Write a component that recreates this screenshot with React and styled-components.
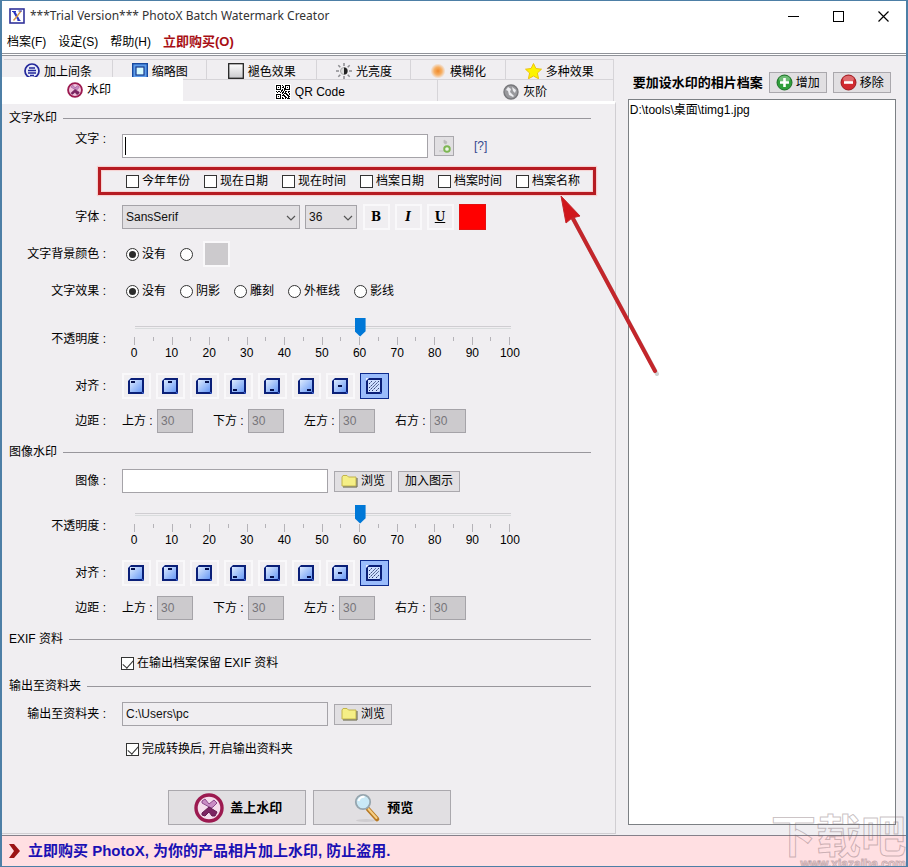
import React, { useState } from 'react'
import styled, { createGlobalStyle, css } from 'styled-components'

const GlobalStyle = createGlobalStyle`
  * {
    box-sizing: border-box;
  }
  body {
    margin: 0;
    background: #f0eef1;
    color: #000;
  }
  body, button, input, select {
    font-family: 'Liberation Sans', 'Noto Sans CJK SC', sans-serif;
    font-size: 12px;
    line-height: 16px;
  }
`

const Window = styled.div`
  position: relative;
  display: flex;
  flex-direction: column;
  min-height: 100vh;
  overflow: hidden;
  border: solid #4d7fa6;
  border-width: 1px 2px;
  background: #f0eef1;
`

const TitleBar = styled.header`
  display: flex;
  align-items: center;
  height: 30px;
  padding-left: 7px;
  background: #fff;
`

const Title = styled.h1`
  flex: 1;
  margin: 0 0 0 5px;
  color: #333;
  font-family: 'Noto Sans', sans-serif;
  font-size: 12px;
  font-weight: normal;
`

const WindowButton = styled.button`
  display: flex;
  align-items: center;
  justify-content: center;
  width: 45px;
  height: 28px;
  padding: 0;
  border: 0;
  background: transparent;
`

const MenuBar = styled.nav`
  display: flex;
  align-items: center;
  gap: 12px;
  height: 25px;
  padding: 0 5px 1px;
  border-bottom: 3px double #909399;
  background: #fff;
`

const MenuItem = styled.button`
  padding: 0;
  border: 0;
  background: transparent;
  ${props => props.$buy && css`
    color: #a80f14;
    font-size: 13px;
    font-weight: bold;
  `}
`

const Body = styled.main`
  flex: 1;
  display: grid;
  grid-template-columns: minmax(600px, 1fr) 32%;
  padding-bottom: 1px;
`

const Editor = styled.div`
  display: flex;
  flex-direction: column;
  padding: 3px 1px 0 0;
`

const TabRow = styled.div`
  display: flex;
  height: ${props => props.$height}px;
  padding: 0 2px;
`

const Tab = styled.button`
  flex: ${props => props.$grow} 1 0;
  display: flex;
  justify-content: center;
  align-items: center;
  gap: 4px;
  min-width: 0;
  padding: 2px 0 0;
  overflow: hidden;
  border: solid #d6d4d8;
  border-width: 1px 1px 0 0;
  background: #f0eef1;
  white-space: nowrap;
  ${props => props.$back && css`
    align-items: flex-start;
    padding-top: 3px;
    line-height: 18px;
  `}
  ${props => props.$active && css`
    position: relative;
    margin: -2px 0 -1px -2px;
    padding: 0 6px 0 0;
    border-color: #fff;
    background: #fff;
  `}
`

const Panel = styled.div`
  flex: 1;
  padding-bottom: 7px;
  border-top: 3px solid #fff;
  border-right: 1px solid #d0ced2;
  border-bottom: 1px solid #d0ced2;
`

const SectionTitle = styled.h2`
  display: flex;
  align-items: center;
  gap: 6px;
  height: ${props => props.$height}px;
  margin: 0 24px 0 7px;
  font-size: 12px;
  font-weight: normal;
  &::after {
    content: '';
    flex: 1;
    height: 1px;
    background: #98969c;
  }
`

const Row = styled.div`
  display: grid;
  grid-template-columns: 104px 1fr;
  column-gap: 16px;
  align-items: center;
  min-height: ${props => props.$height}px;
  margin-bottom: ${props => props.$after || 0}px;
`

const RowLabel = styled.span`
  justify-self: end;
  align-self: ${props => (props.$top ? 'start' : 'center')};
  line-height: 14px;
`

const Field = styled.div`
  display: flex;
  align-items: center;
  gap: ${props => props.$gap || 6}px;
`

const TextInput = styled.input`
  width: ${props => props.$width}px;
  height: 24px;
  padding: 0 3px;
  border: 1px solid #a5a3a8;
  background: #fff;
  color: #111;
  &:read-only {
    background: #f0eef1;
  }
  &:disabled {
    background: #cccacd;
    color: #77757a;
  }
  &:focus {
    outline: none;
  }
`

// draws its own steady caret while it is empty
const CaretInput = styled(TextInput)`
  caret-color: transparent;
  &:placeholder-shown {
    background: linear-gradient(#000, #000) 2px center / 1px 18px no-repeat #fff;
  }
`

const PushButton = styled.button`
  display: flex;
  align-items: center;
  justify-content: center;
  gap: 3px;
  height: 21px;
  padding: 0 6px;
  border: 1px solid #aaa8ad;
  background: #e1dfe2;
  white-space: nowrap;
`

const BigButton = styled(PushButton)`
  gap: 6px;
  width: 138px;
  height: 35px;
  padding: 0 5px 0 8px;
  font-size: 13px;
  font-weight: bold;
`

const InsertButton = styled(PushButton)`
  width: 20px;
  height: 20px;
  padding: 0;
`

const HelpLink = styled.a`
  margin-left: 14px;
  color: #34498f;
  text-decoration: none;
`

const TokenFrame = styled.div`
  position: relative;
  display: flex;
  align-items: center;
  gap: 14px;
  height: 28px;
  margin: 7px 19px 0 96px;
  padding-left: 25px;
  border: 3px solid #b61b22;
  box-shadow: 0 0 1px 1px #f7cfcf, inset 0 0 1px 1px #f7cfcf;
`

const Arrow = styled.svg`
  position: absolute;
  top: 23px;
  left: 455px;
  z-index: 2;
  pointer-events: none;
`

const Option = styled.label`
  display: flex;
  align-items: center;
  gap: 3px;
  white-space: nowrap;
`

const Choice = styled.input`
  appearance: none;
  position: relative;
  flex: none;
  width: 13px;
  height: 13px;
  margin: 0;
  border: 1px solid #333;
  background: #fff;
  &[type='radio'] {
    border-radius: 50%;
  }
  &[type='radio']:checked::after {
    content: '';
    position: absolute;
    inset: 2px;
    border-radius: 50%;
    background: #2b2b2b;
  }
  &[type='checkbox']:checked::after {
    content: '';
    position: absolute;
    top: 0;
    left: 3px;
    width: 5px;
    height: 9px;
    border: solid #333;
    border-width: 0 1px 1px 0;
    transform: rotate(42deg);
  }
`

const SelectBox = styled.span`
  position: relative;
  width: ${props => props.$width}px;
  svg {
    position: absolute;
    top: 10px;
    right: 4px;
    pointer-events: none;
  }
`

const Select = styled.select`
  appearance: none;
  display: block;
  width: 100%;
  height: 24px;
  padding: 0 3px;
  border: 1px solid #a5a3a8;
  border-radius: 0;
  background: #e1dfe2;
  color: #111;
`

const ToolButton = styled.button`
  display: flex;
  align-items: center;
  justify-content: center;
  width: ${props => props.$width || 27}px;
  height: 26px;
  padding: 0 1px 0 0;
  border: 2px solid #f9f8fa;
  background: #f0eef1;
  font-family: 'DejaVu Serif', serif;
  font-size: 12px;
  font-weight: bold;
  ${props => props.$active && css`
    border: 1px solid #0c2a8c;
    background: #9abcfb;
  `}
`

const Swatch = styled(ToolButton)`
  border: ${props => (props.$framed ? '2px solid #f9f8fa' : '1px solid #e51010')};
  background: ${props => props.$color};
`

const FormatTools = styled.div`
  display: flex;
  gap: 5px;
  margin-left: 1px;
`

const Slider = styled.div`
  width: 400px;
  max-width: 100%;
  padding: 1px 0;
`

const Range = styled.input`
  appearance: none;
  display: block;
  width: calc(100% - 13px);
  height: 20px;
  margin: 0 0 0 7px;
  background: linear-gradient(#cfcdd1, #cfcdd1) center 9px / calc(100% - 11px) 1px no-repeat,
    linear-gradient(#d9dcdd, #d9dcdd) center 11px / calc(100% - 11px) 1px no-repeat;
  &::-webkit-slider-thumb {
    appearance: none;
    width: 11px;
    height: 19px;
    background: #0078d7;
    clip-path: polygon(0 0, 100% 0, 100% 72%, 50% 100%, 0 72%);
  }
`

const Ticks = styled.div`
  display: flex;
  justify-content: space-between;
  height: 8px;
  margin: 0 12px;
`

const Tick = styled.i`
  width: 1px;
  height: ${props => (props.$major ? 8 : 4)}px;
  background: #b5b3b8;
`

const TickLabels = styled.div`
  display: flex;
  justify-content: space-between;
  span {
    width: 24px;
    text-align: center;
  }
`

const MarginField = styled.label`
  display: grid;
  grid-template-columns: 35px 36px;
  align-items: center;
`

const CheckRow = styled.div`
  display: flex;
  align-items: center;
  height: ${props => props.$height}px;
  padding-left: ${props => props.$indent}px;
`

const Actions = styled.div`
  display: flex;
  justify-content: center;
  gap: 7px;
  margin-top: 18px;
  padding-left: 2px;
`

const Files = styled.aside`
  display: flex;
  flex-direction: column;
  padding: 16px 10px 9px 11px;
`

const FilesHeader = styled.div`
  display: flex;
  align-items: center;
  gap: 6px;
  margin-bottom: 6px;
  padding-left: 5px;
  white-space: nowrap;
`

const FilesTitle = styled.h2`
  margin: 0;
  font-size: 13px;
  font-weight: bold;
`

const FileList = styled.ul`
  flex: 1;
  margin: 0;
  padding: 2px 1px;
  border: 1px solid #7c8084;
  background: #fff;
  list-style: none;
`

const Footer = styled.footer`
  display: flex;
  align-items: center;
  gap: 7px;
  height: 31px;
  padding-left: 6px;
  border-top: 1px solid #85808a;
  background: #ffdfe2;
`

const BuyLink = styled.a`
  color: #1a10b4;
  font-size: 15px;
  font-weight: bold;
  text-decoration: none;
`

const SiteMark = styled.div`
  position: absolute;
  right: 0;
  bottom: -4px;
  z-index: 3;
  color: transparent;
  font-family: 'Noto Sans CJK SC', sans-serif;
  font-weight: bold;
  text-align: right;
  pointer-events: none;
  -webkit-text-stroke: 1px rgba(120, 100, 105, 0.4);
`

const MarkName = styled.div`
  font-size: 45px;
  line-height: 48px;
`

const MarkUrl = styled.div`
  font-family: 'Liberation Sans', sans-serif;
  font-size: 12px;
  line-height: 12px;
`

const AppIcon = () => (
  <svg width="16" height="16" viewBox="0 0 16 16">
    <rect x="1" y="1" width="14" height="14" fill="#fff" stroke="#31329a" strokeWidth="1.6" />
    <path d="M5 3.5l5 9" stroke="#2a35c0" strokeWidth="2.2" />
    <path d="M12 3L7.5 9 4.5 12.5" fill="none" stroke="#d99a4a" strokeWidth="1.4" />
    <path d="M9.5 3H13M3 3.5h4M8.5 12.5h3" stroke="#2a35c0" />
  </svg>
)

const BarsIcon = () => (
  <svg width="16" height="16" viewBox="0 0 16 16">
    <circle cx="8" cy="8" r="7" fill="#e9ecfa" stroke="#23279a" strokeWidth="1.7" />
    <path d="M5 5h6M4 7.5h8M4 10h8M6 12.5h4" stroke="#23279a" strokeWidth="1.3" />
  </svg>
)

const ThumbIcon = () => (
  <svg width="16" height="16" viewBox="0 0 16 16">
    <rect x=".7" y=".7" width="14.6" height="14.6" fill="#5d9cea" stroke="#1749a0" strokeWidth="1.4" />
    <rect x="4" y="4" width="8" height="8" fill="#d7fbff" stroke="#173b8c" strokeWidth="1.2" />
  </svg>
)

const FadeIcon = () => (
  <svg width="16" height="16" viewBox="0 0 16 16">
    <defs>
      <linearGradient id="fade" x1="0" y1="0" x2="0" y2="1">
        <stop offset="0" stopColor="#fff" />
        <stop offset="1" stopColor="#c9c9cc" />
      </linearGradient>
    </defs>
    <rect x=".7" y=".7" width="14.6" height="14.6" fill="url(#fade)" stroke="#222" strokeWidth="1.3" />
  </svg>
)

const BrightIcon = () => (
  <svg width="16" height="16" viewBox="0 0 16 16">
    <g stroke="#8c8c90" strokeWidth="1.5">
      <path d="M8 0v3M8 13v3M0 8h3M13 8h3M2.3 2.3l2 2M11.7 11.7l2 2M2.3 13.7l2-2M11.7 4.3l2-2" />
    </g>
    <circle cx="8" cy="8" r="3.5" fill="#ddd" stroke="#aaa" />
    <path d="M8 4.5a3.5 3.5 0 0 1 0 7z" fill="#222" />
  </svg>
)

const BlurIcon = () => (
  <svg width="16" height="16" viewBox="0 0 16 16">
    <defs>
      <radialGradient id="glow">
        <stop offset="0" stopColor="#f08a2c" />
        <stop offset=".5" stopColor="#f6ae62" />
        <stop offset="1" stopColor="#f6ae62" stopOpacity="0" />
      </radialGradient>
    </defs>
    <circle cx="8" cy="8" r="7.5" fill="url(#glow)" />
  </svg>
)

const StarIcon = () => (
  <svg width="17" height="17" viewBox="0 0 17 17">
    <path
      d="M8.500 .5l2.400 5 5.600.7-4.100 3.800 1.200 5.800-5.100-2.800-5.100 2.800 1.200-5.800L.5 6.200l5.600-.7z"
      fill="#fdf400"
      stroke="#ecc20e"
      strokeLinejoin="round"
    />
  </svg>
)

const StampIcon = ({ size, light }) => (
  <svg width={size} height={size} viewBox="0 0 30 30">
    <circle cx="15" cy="15" r="13" fill={light ? '#f0c3dc' : '#f5dcec'} stroke="#9c1a50" strokeWidth="3.4" />
    <path d="M8 8l3-2 4 5 5-4 3 3-4 4-2 1-9-5z" fill="#c98cc4" stroke="#8d4a8c" />
    <path d="M8 20l7-6 8 5-2 4-3 0-3-4-4 4-3-1z" fill="#7c2462" stroke="#641a50" />
  </svg>
)

// dot pattern, one string per line
const qrRows = [
  '11111010011111',
  '10001001010001',
  '10101011010101',
  '10001000110001',
  '11111010111111',
  '00000110100000',
  '10110101011011',
  '01001011010010',
  '00000010111001',
  '11111001001101',
  '10001011100110',
  '10101000110011',
  '10001010011010',
  '11111011010111',
]

const QrIcon = () => (
  <svg width="16" height="16" viewBox="-1 -1 16 16" shapeRendering="crispEdges">
    <rect x="-1" y="-1" width="16" height="16" fill="#fff" />
    {qrRows.map((line, y) => line.split('').map((dot, x) => (
      dot === '1' && <rect key={`${x}-${y}`} x={x} y={y} width="1" height="1" />
    )))}
  </svg>
)

const GrayIcon = () => (
  <svg width="16" height="16" viewBox="0 0 16 16">
    <circle cx="8" cy="8" r="7" fill="#99999d" stroke="#77777b" strokeWidth="1.4" />
    <path d="M5 3l3 2-1 3 4 4-1 1-4-2-1-4-2-1zM9 3l4 3-1 3-2-2z" fill="#ececf0" />
  </svg>
)

const InsertIcon = () => (
  <svg width="16" height="16" viewBox="0 0 16 16">
    <path d="M3 13h5M8 2l3 2-1 2-2-1z" fill="#bbb" stroke="#bbb" strokeWidth=".8" />
    <circle cx="11" cy="11" r="2.8" fill="#eef6e6" stroke="#7db653" strokeWidth="1.9" />
  </svg>
)

const FolderIcon = () => (
  <svg width="17" height="14" viewBox="0 0 17 14">
    <path d="M1 12V3l1-1.5h4L7.5 3H15v9z" fill="#f5ef86" stroke="#c2b44a" />
    <path d="M16 4v9H2" fill="none" stroke="#62603c" />
  </svg>
)

const BallIcon = ({ color, rim, plus }) => (
  <svg width="17" height="17" viewBox="0 0 17 17">
    <circle cx="8.5" cy="8.5" r="7.5" fill={color} stroke={rim} />
    <ellipse cx="8.5" cy="5" rx="5.5" ry="3.3" fill="#fff" opacity=".3" />
    <path d={plus ? 'M4 8.5h9M8.5 4v9' : 'M4 8.5h9'} stroke="#fff" strokeWidth="2.6" />
  </svg>
)

const LensIcon = () => (
  <svg width="28" height="30" viewBox="0 0 28 30">
    <ellipse cx="13" cy="27.5" rx="10" ry="1.5" fill="#cfcdd0" />
    <path d="M15 16l9 10" stroke="#b87a24" strokeWidth="4.6" strokeLinecap="round" />
    <path d="M15.5 16l8 9" stroke="#f6cf86" strokeWidth="2" strokeLinecap="round" />
    <circle cx="10" cy="9" r="7.2" fill="#c9e9f6" stroke="#96a5ae" strokeWidth="1.8" />
    <path d="M5.500 8a5 5 0 0 1 6-4" fill="none" stroke="#fff" strokeWidth="2" />
  </svg>
)

const Chevron = () => (
  <svg width="10" height="6" viewBox="0 0 10 6">
    <path d="M1 1l4 4 4-4" fill="none" stroke="#555" strokeWidth="1.2" />
  </svg>
)

// position of the small mark inside the frame
const alignments = [
  { name: '左上', x: 3, y: 3 },
  { name: '中上', x: 6, y: 3 },
  { name: '右上', x: 9, y: 3 },
  { name: '左下', x: 3, y: 11 },
  { name: '中下', x: 6, y: 11 },
  { name: '右下', x: 9, y: 11 },
  { name: '中央', x: 6, y: 7 },
  { name: '填满', fill: true },
]

const AlignIcon = ({ x, y, fill }) => (
  <svg width="16" height="16" viewBox="0 0 16 16">
    <defs>
      <linearGradient id="tile" x1="0" y1="0" x2="1" y2="1">
        <stop offset="0" stopColor="#e6f1ff" />
        <stop offset="1" stopColor="#5f93f5" />
      </linearGradient>
    </defs>
    <rect x="1" y="1" width="14" height="14" fill={fill ? '#cfe0ff' : 'url(#tile)'} stroke="#0a1f78" strokeWidth="2" />
    <path d="M0 0h3L0 3z" fill="#e8f0ff" />
    <path d="M13 13l3 2v1h-1z" fill="#4a6fd8" />
    {fill
      ? <path d="M3 6l3-3M3 10l7-7M3 13l10-10M6 13l7-7M10 13l3-3" stroke="#26356a" strokeWidth="1" strokeDasharray="2 1" />
      : <rect x={x} y={y} width="4" height="2" fill="#05104c" />}
  </svg>
)

const backTabs = [
  { label: '加上间条', grow: 109, icon: <BarsIcon /> },
  { label: '缩略图', grow: 94, icon: <ThumbIcon /> },
  { label: '褪色效果', grow: 110, icon: <FadeIcon /> },
  { label: '光亮度', grow: 94, icon: <BrightIcon /> },
  { label: '模糊化', grow: 94, icon: <BlurIcon /> },
  { label: '多种效果', grow: 108, icon: <StarIcon /> },
]

const frontTabs = [
  { label: '水印', grow: 174, icon: <StampIcon size={16} light />, active: true },
  { label: 'QR Code', grow: 253, icon: <QrIcon /> },
  { label: '灰阶', grow: 175, icon: <GrayIcon /> },
]

const tokens = ['今年年份', '现在日期', '现在时间', '档案日期', '档案时间', '档案名称']
const effects = ['没有', '阴影', '雕刻', '外框线', '影线']
const sides = ['上方', '下方', '左方', '右方']
const ticks = Array.from({ length: 21 }, (_, i) => i * 5)

const Placement = ({ name }) => {
  const [opacity, setOpacity] = useState(60)
  const [align, setAlign] = useState('填满')
  return (
    <>
      <Row $height={52}>
        <RowLabel as="label" htmlFor={`${name}-opacity`}>不透明度 :</RowLabel>
        <Slider>
          <Range
            id={`${name}-opacity`}
            type="range"
            value={opacity}
            onChange={event => setOpacity(event.target.value)}
          />
          <Ticks>
            {ticks.map(tick => <Tick key={tick} $major={tick % 10 === 0} />)}
          </Ticks>
          <TickLabels>
            {ticks.filter(tick => tick % 10 === 0).map(tick => <span key={tick}>{tick}</span>)}
          </TickLabels>
        </Slider>
      </Row>
      <Row $height={42}>
        <RowLabel>对齐 :</RowLabel>
        <Field $gap={5}>
          {alignments.map(item => (
            <ToolButton
              key={item.name}
              type="button"
              aria-label={item.name}
              $width={29}
              $active={item.name === align}
              onClick={() => setAlign(item.name)}
            >
              <AlignIcon {...item} />
            </ToolButton>
          ))}
        </Field>
      </Row>
      <Row $height={28}>
        <RowLabel>边距 :</RowLabel>
        <Field $gap={20}>
          {sides.map(side => (
            <MarginField key={side}>
              {side} :
              <TextInput $width={36} defaultValue="30" disabled />
            </MarginField>
          ))}
        </Field>
      </Row>
    </>
  )
}

const Tabs = () => (
  <>
    <TabRow $height={20}>
      {backTabs.map(tab => (
        <Tab key={tab.label} type="button" $grow={tab.grow} $back>
          {tab.icon}
          {tab.label}
        </Tab>
      ))}
    </TabRow>
    <TabRow $height={22}>
      {frontTabs.map(tab => (
        <Tab key={tab.label} type="button" $grow={tab.grow} $active={tab.active}>
          {tab.icon}
          {tab.label}
        </Tab>
      ))}
    </TabRow>
  </>
)

const TextWatermark = () => (
  <section>
    <SectionTitle $height={28}>文字水印</SectionTitle>
    <Row $height={28}>
      <RowLabel as="label" htmlFor="text" $top>文字 :</RowLabel>
      <Field>
        <CaretInput id="text" type="text" placeholder=" " $width={306} />
        <InsertButton type="button" aria-label="插入"><InsertIcon /></InsertButton>
        <HelpLink href="#help">[?]</HelpLink>
      </Field>
    </Row>
    <TokenFrame>
      {tokens.map(token => (
        <Option key={token}>
          <Choice type="checkbox" />
          {token}
        </Option>
      ))}
      <Arrow width="110" height="190" viewBox="0 0 110 190">
        <path d="M14 20L101 181" stroke="#000" strokeWidth="4" opacity=".18" strokeLinecap="round" />
        <path d="M14 20L99 178" stroke="#c3262b" strokeWidth="4" strokeLinecap="round" />
        <path d="M5 3L24 23L16 25L10 30z" fill="#d0161b" stroke="#c3262b" strokeLinejoin="round" />
      </Arrow>
    </TokenFrame>
    <Row $height={44}>
      <RowLabel as="label" htmlFor="font">字体 :</RowLabel>
      <Field $gap={5}>
        <SelectBox $width={178}>
          <Select id="font"><option>SansSerif</option></Select>
          <Chevron />
        </SelectBox>
        <SelectBox $width={52}>
          <Select aria-label="字号"><option>36</option></Select>
          <Chevron />
        </SelectBox>
        <FormatTools>
          <ToolButton type="button">B</ToolButton>
          <ToolButton type="button"><i>I</i></ToolButton>
          <ToolButton type="button"><u>U</u></ToolButton>
          <Swatch type="button" aria-label="文字颜色" $color="#ff0000" />
        </FormatTools>
      </Field>
    </Row>
    <Row $height={30}>
      <RowLabel>文字背景颜色 :</RowLabel>
      <CheckRow $indent={4}>
        <Field $gap={14}>
          <Option>
            <Choice type="radio" name="background" defaultChecked />
            没有
          </Option>
          <Field $gap={10}>
            <Choice type="radio" name="background" aria-label="背景颜色" />
            <Swatch type="button" aria-label="选择颜色" $color="#cccacd" $framed />
          </Field>
        </Field>
      </CheckRow>
    </Row>
    <Row $height={44}>
      <RowLabel>文字效果 :</RowLabel>
      <CheckRow $indent={4}>
        <Field $gap={14}>
          {effects.map((effect, i) => (
            <Option key={effect}>
              <Choice type="radio" name="effect" defaultChecked={i === 0} />
              {effect}
            </Option>
          ))}
        </Field>
      </CheckRow>
    </Row>
    <Placement name="text" />
  </section>
)

const ImageWatermark = () => (
  <section>
    <SectionTitle $height={34}>图像水印</SectionTitle>
    <Row $height={24} $after={7}>
      <RowLabel as="label" htmlFor="image">图像 :</RowLabel>
      <Field>
        <TextInput id="image" type="text" $width={206} />
        <PushButton type="button"><FolderIcon />浏览</PushButton>
        <PushButton type="button">加入图示</PushButton>
      </Field>
    </Row>
    <Placement name="image" />
  </section>
)

const Output = () => (
  <section>
    <SectionTitle $height={34}>EXIF 资料</SectionTitle>
    <CheckRow $height={14} $indent={119}>
      <Option>
        <Choice type="checkbox" defaultChecked />
        在输出档案保留 EXIF 资料
      </Option>
    </CheckRow>
    <SectionTitle $height={32}>输出至资料夹</SectionTitle>
    <Row $height={24}>
      <RowLabel as="label" htmlFor="output">输出至资料夹 :</RowLabel>
      <Field>
        <TextInput id="output" type="text" $width={206} value="C:\Users\pc" readOnly />
        <PushButton type="button"><FolderIcon />浏览</PushButton>
      </Field>
    </Row>
    <CheckRow $height={46} $indent={124}>
      <Option>
        <Choice type="checkbox" defaultChecked />
        完成转换后, 开启输出资料夹
      </Option>
    </CheckRow>
  </section>
)

const App = () => (
  <>
    <GlobalStyle />
    <Window>
      <TitleBar>
        <AppIcon />
        <Title>***Trial Version*** PhotoX Batch Watermark Creator</Title>
        <WindowButton type="button" aria-label="最小化">
          <svg width="11" height="11"><path d="M0 5.5h11" stroke="#000" /></svg>
        </WindowButton>
        <WindowButton type="button" aria-label="最大化">
          <svg width="11" height="11"><rect x=".5" y=".5" width="10" height="10" fill="none" stroke="#000" /></svg>
        </WindowButton>
        <WindowButton type="button" aria-label="关闭">
          <svg width="11" height="11"><path d="M.5 .5l10 10M10.5 .5l-10 10" stroke="#000" strokeWidth="1.2" /></svg>
        </WindowButton>
      </TitleBar>
      <MenuBar>
        <MenuItem type="button">档案(F)</MenuItem>
        <MenuItem type="button">设定(S)</MenuItem>
        <MenuItem type="button">帮助(H)</MenuItem>
        <MenuItem type="button" $buy>立即购买(O)</MenuItem>
      </MenuBar>
      <Body>
        <Editor>
          <Tabs />
          <Panel>
            <TextWatermark />
            <ImageWatermark />
            <Output />
            <Actions>
              <BigButton type="button"><StampIcon size={30} />盖上水印</BigButton>
              <BigButton type="button"><LensIcon />预览</BigButton>
            </Actions>
          </Panel>
        </Editor>
        <Files>
          <FilesHeader>
            <FilesTitle>要加设水印的相片档案</FilesTitle>
            <PushButton type="button"><BallIcon color="#2f9e3a" rim="#1d6f28" plus />增加</PushButton>
            <PushButton type="button"><BallIcon color="#d02a30" rim="#9c1a20" />移除</PushButton>
          </FilesHeader>
          <FileList>
            <li>D:\tools\桌面\timg1.jpg</li>
          </FileList>
        </Files>
      </Body>
      <Footer>
        <svg width="13" height="14" viewBox="0 0 13 14">
          <path d="M1 0h5l6 7-6 7H1l5-7z" fill="#9c1414" />
        </svg>
        <BuyLink href="#buy">立即购买 PhotoX, 为你的产品相片加上水印, 防止盗用.</BuyLink>
      </Footer>
      <SiteMark>
        <MarkName>下载吧</MarkName>
        <MarkUrl>www.xiazaiba.com</MarkUrl>
      </SiteMark>
    </Window>
  </>
)

export default App
